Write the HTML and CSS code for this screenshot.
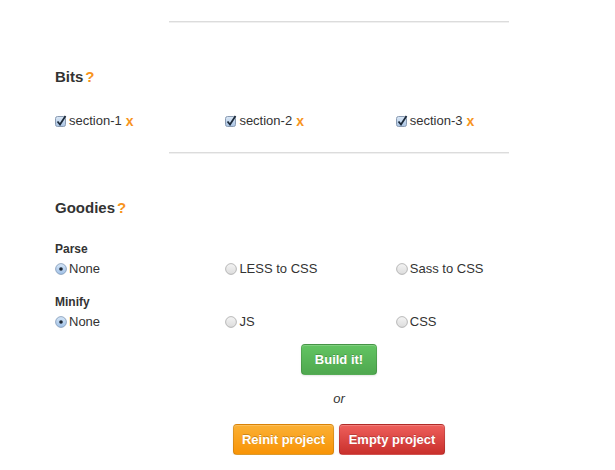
FILE: index.html
```html
<!DOCTYPE html>
<html>
<head>
<meta charset="utf-8">
<link rel="stylesheet" href="styles.css">
</head>
<body>
<div class="page">
  <hr class="rule rule-top">
  <h2 class="heading">Bits<span class="help">?</span></h2>
  <div class="row bits">
    <label class="col"><svg class="box" viewBox="0 0 12 12" width="12" height="12"><defs><linearGradient id="cb" x1="0" y1="0" x2="0" y2="1"><stop offset="0" stop-color="#dbe8f6"/><stop offset="1" stop-color="#a9c3e2"/></linearGradient></defs><rect x="0.5" y="1.5" width="10" height="10" rx="2" fill="url(#cb)" stroke="#8a9bb2"/><path d="M2.5 6.5 L5 9.5 L10.5 1" fill="none" stroke="#1c2a3a" stroke-width="1.8"/></svg>section-1<span class="del">x</span></label>
    <label class="col"><svg class="box" viewBox="0 0 12 12" width="12" height="12"><rect x="0.5" y="1.5" width="10" height="10" rx="2" fill="url(#cb)" stroke="#8a9bb2"/><path d="M2.5 6.5 L5 9.5 L10.5 1" fill="none" stroke="#1c2a3a" stroke-width="1.8"/></svg>section-2<span class="del">x</span></label>
    <label class="col"><svg class="box" viewBox="0 0 12 12" width="12" height="12"><rect x="0.5" y="1.5" width="10" height="10" rx="2" fill="url(#cb)" stroke="#8a9bb2"/><path d="M2.5 6.5 L5 9.5 L10.5 1" fill="none" stroke="#1c2a3a" stroke-width="1.8"/></svg>section-3<span class="del">x</span></label>
  </div>
  <hr class="rule rule-mid">
  <h2 class="heading goodies">Goodies<span class="help">?</span></h2>
  <div class="label">Parse</div>
  <div class="row radios">
    <label class="col"><svg class="radio" viewBox="0 0 12 12" width="12" height="12"><defs><linearGradient id="rb" x1="0" y1="0" x2="0" y2="1"><stop offset="0" stop-color="#d6e6f7"/><stop offset="1" stop-color="#9fc0e6"/></linearGradient><linearGradient id="ro" x1="0" y1="0" x2="0" y2="1"><stop offset="0" stop-color="#f4f4f4"/><stop offset="1" stop-color="#dcdcdc"/></linearGradient></defs><circle cx="6" cy="6" r="5.4" fill="url(#rb)" stroke="#7f97b5" stroke-width="0.8"/><circle cx="6" cy="6" r="1.8" fill="#1d2733"/></svg>None</label>
    <label class="col"><svg class="radio" viewBox="0 0 12 12" width="12" height="12"><circle cx="6" cy="6" r="5.4" fill="url(#ro)" stroke="#a8a8a8" stroke-width="0.8"/></svg>LESS to CSS</label>
    <label class="col"><svg class="radio" viewBox="0 0 12 12" width="12" height="12"><circle cx="6" cy="6" r="5.4" fill="url(#ro)" stroke="#a8a8a8" stroke-width="0.8"/></svg>Sass to CSS</label>
  </div>
  <div class="label label-gap">Minify</div>
  <div class="row radios">
    <label class="col"><svg class="radio" viewBox="0 0 12 12" width="12" height="12"><circle cx="6" cy="6" r="5.4" fill="url(#rb)" stroke="#7f97b5" stroke-width="0.8"/><circle cx="6" cy="6" r="1.8" fill="#1d2733"/></svg>None</label>
    <label class="col"><svg class="radio" viewBox="0 0 12 12" width="12" height="12"><circle cx="6" cy="6" r="5.4" fill="url(#ro)" stroke="#a8a8a8" stroke-width="0.8"/></svg>JS</label>
    <label class="col"><svg class="radio" viewBox="0 0 12 12" width="12" height="12"><circle cx="6" cy="6" r="5.4" fill="url(#ro)" stroke="#a8a8a8" stroke-width="0.8"/></svg>CSS</label>
  </div>
  <div class="actions">
    <button class="btn btn-green">Build it!</button>
  </div>
  <p class="or">or</p>
  <div class="actions pair">
    <button class="btn btn-orange">Reinit project</button>
    <button class="btn btn-red">Empty project</button>
  </div>
</div>
</body>
</html>
```
FILE: styles.css
```css
html, body {
  margin: 0;
  padding: 0;
  background: #fff;
}
body {
  font-family: "Liberation Sans", Arial, sans-serif;
  color: #333;
  font-size: 13px;
}
.page {
  margin-left: 55px;
  width: 568px;
  overflow: visible;
}
.rule {
  width: 60%;
  margin: 0 auto;
  border: 0;
  border-top: 1px solid #dcdcdc;
  border-bottom: 1px solid #f0f0f0;
  height: 0;
}
.rule-top { margin-top: 21px; }
.rule-mid { margin-top: 21px; }
.heading {
  margin: 44px 0 0;
  font-size: 15px;
  line-height: 20px;
  font-weight: bold;
  color: #333;
}
.help {
  color: #f7941d;
  margin-left: 2px;
}
.row {
  display: flex;
}
.col {
  width: 30%;
  display: flex;
  align-items: center;
  white-space: nowrap;
}
.bits {
  margin-top: 24px;
  line-height: 20px;
}
.box, .radio {
  flex: none;
  margin-right: 2px;
}
.del {
  color: #f7941d;
  font-weight: bold;
  font-size: 14px;
  margin-left: 4px;
}
.goodies { margin-top: 44px; }
.label {
  margin-top: 23px;
  font-weight: bold;
  font-size: 12px;
  line-height: 16px;
  color: #333;
}
.label-gap { margin-top: 16px; }
.radios {
  margin-top: 3px;
  line-height: 18px;
}
.actions {
  display: flex;
  justify-content: center;
  gap: 5px;
  margin-top: 13px;
}
.pair { margin-top: 16px; }
.btn {
  font-family: "Liberation Sans", Arial, sans-serif;
  font-size: 13px;
  font-weight: bold;
  color: #fff;
  height: 31px;
  border-radius: 4px;
  border: 1px solid rgba(0,0,0,0.12);
  text-shadow: 0 -1px 0 rgba(0,0,0,0.2);
  box-shadow: inset 0 1px 0 rgba(255,255,255,0.2), 0 1px 2px rgba(0,0,0,0.1);
  padding: 0;
}
.btn-green {
  width: 76px;
  background: linear-gradient(#62c462, #4fa84f);
}
.btn-orange {
  width: 101px;
  background: linear-gradient(#fbb034, #f89406);
}
.btn-red {
  width: 106px;
  background: linear-gradient(#ee5f5b, #c9302c);
}
.or {
  margin: 15px 0 0;
  text-align: center;
  font-style: italic;
  line-height: 18px;
  color: #333;
}
```
